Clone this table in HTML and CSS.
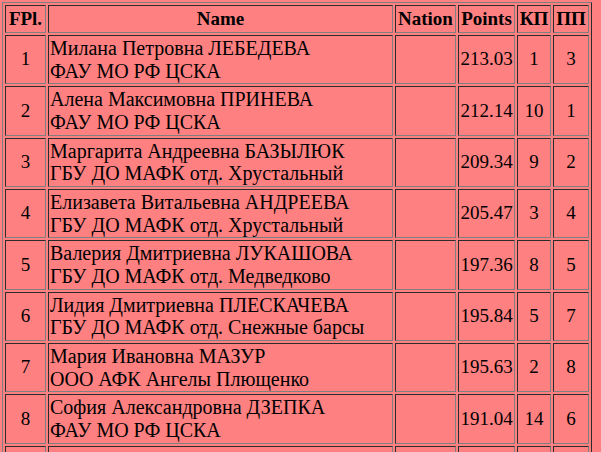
FILE: index.html
```html
<!DOCTYPE html>
<html>
<head>
<meta charset="utf-8">
<link rel="stylesheet" href="styles.css">
</head>
<body>
<table class="results">
<thead>
<tr><th class="c-pl">FPl.</th><th class="c-name">Name</th><th class="c-nat">Nation</th><th class="c-pts">Points</th><th class="c-kp">КП</th><th class="c-pp">ПП</th></tr>
</thead>
<tbody>
<tr><td>1</td><td class="name">Милана Петровна ЛЕБЕДЕВА<br>ФАУ МО РФ ЦСКА</td><td></td><td>213.03</td><td>1</td><td>3</td></tr>
<tr><td>2</td><td class="name">Алена Максимовна ПРИНЕВА<br>ФАУ МО РФ ЦСКА</td><td></td><td>212.14</td><td>10</td><td>1</td></tr>
<tr><td>3</td><td class="name">Маргарита Андреевна БАЗЫЛЮК<br>ГБУ ДО МАФК отд. Хрустальный</td><td></td><td>209.34</td><td>9</td><td>2</td></tr>
<tr><td>4</td><td class="name">Елизавета Витальевна АНДРЕЕВА<br>ГБУ ДО МАФК отд. Хрустальный</td><td></td><td>205.47</td><td>3</td><td>4</td></tr>
<tr><td>5</td><td class="name">Валерия Дмитриевна ЛУКАШОВА<br>ГБУ ДО МАФК отд. Медведково</td><td></td><td>197.36</td><td>8</td><td>5</td></tr>
<tr><td>6</td><td class="name">Лидия Дмитриевна ПЛЕСКАЧЕВА<br>ГБУ ДО МАФК отд. Снежные барсы</td><td></td><td>195.84</td><td>5</td><td>7</td></tr>
<tr><td>7</td><td class="name">Мария Ивановна МАЗУР<br>ООО АФК Ангелы Плющенко</td><td></td><td>195.63</td><td>2</td><td>8</td></tr>
<tr><td>8</td><td class="name">София Александровна ДЗЕПКА<br>ФАУ МО РФ ЦСКА</td><td></td><td>191.04</td><td>14</td><td>6</td></tr>
<tr class="tail"><td></td><td class="name"></td><td></td><td></td><td></td><td></td></tr>
</tbody>
</table>
</body>
</html>
```
FILE: styles.css
```css
html, body {
  margin: 0;
  background: #ff8080;
}
body {
  padding: 2px;
  font-family: "Liberation Serif", "Times New Roman", serif;
  font-size: 19px;
  color: #000;
}
.results {
  border: 1px outset #808080;
  border-spacing: 2px;
  background: #ff8080;
  font-family: "Liberation Serif", "Times New Roman", serif;
  font-size: 19px;
}
.results th, .results td {
  border: 1px inset #808080;
  padding: 1px;
  text-align: center;
  vertical-align: middle;
}
.results th {
  font-weight: bold;
  line-height: 24px;
}
.results td {
  line-height: 22.65px;
}
.results td.name {
  text-align: left;
  font-size: 20px;
}
.results tr.tail td {
  height: 45px;
}
.c-pl { width: 37px; }
.c-name { width: 341px; }
.c-nat { width: 57px; }
.c-pts { width: 53px; }
.c-kp { width: 30px; }
.c-pp { width: 32px; }
```
